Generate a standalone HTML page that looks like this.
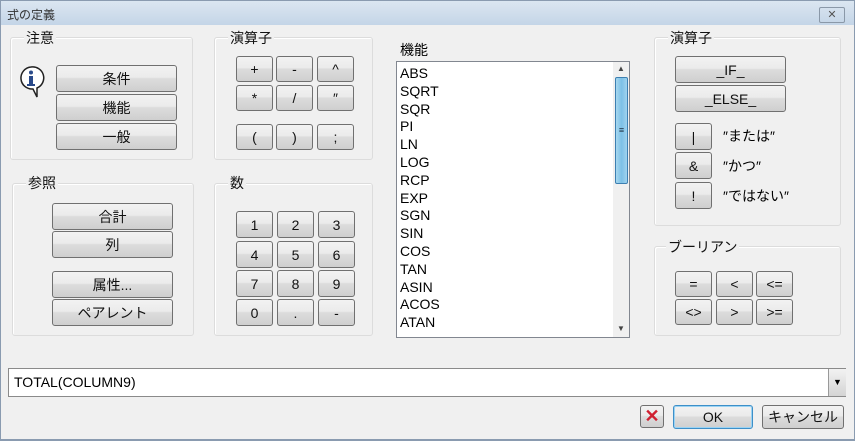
<!DOCTYPE html><html><head><meta charset="utf-8"><style>
body{margin:0;width:855px;height:441px;overflow:hidden;background:#f0f0f0;font-family:"Liberation Sans","Noto Sans CJK JP",sans-serif;position:relative}
.a{position:absolute}
.t{position:absolute;left:0;top:0;width:853px;height:24px;background:linear-gradient(#dbe6f1,#c4d5e7);border:1px solid #8a9bb0;border-bottom:none;font-size:12px;color:#333}
.g{position:absolute;border:1px solid #dcdcdc;border-radius:3px;box-shadow:inset 1px 1px 0 #fff}
.l{position:absolute;background:#f0f0f0;padding:0 2px;font-size:14px;color:#111;line-height:16px}
.b{position:absolute;box-sizing:border-box;border:1px solid #707070;border-radius:3px;background:linear-gradient(#f2f2f2 0,#ebebeb 45%,#dcdcdc 50%,#cfcfcf 100%);font-size:14px;color:#111;text-align:center;display:flex;align-items:center;justify-content:center}
.lb{position:absolute;left:396px;top:61px;width:234px;height:277px;background:#fff;border:1px solid #828790;box-sizing:border-box}
.lb div{font-size:14px;line-height:17.8px;padding-left:3px;color:#000}
</style></head><body>
<div class="t"><span class="a" style="left:6px;top:5px">式の定義</span>
<div class="a" style="left:818px;top:6px;width:24px;height:14px;border:1px solid #8a98a8;border-radius:2px;font-size:11px;text-align:center;line-height:14px;color:#555">✕</div></div>
<div class="a" style="left:0;top:24px;width:1px;height:417px;background:#8a9bb0"></div>
<div class="a" style="right:0;top:24px;width:1px;height:417px;background:#8a9bb0"></div>
<div class="a" style="left:0;top:439px;width:855px;height:2px;background:#8a9bb0"></div>

<div class="g" style="left:10px;top:37px;width:181px;height:121px"></div><div class="l" style="left:24px;top:30px">注意</div>
<svg class="a" style="left:18px;top:65px" width="28" height="36"><path d="M13 2a11 11 0 1 0 2 22l4 8v-9a11 11 0 0 0-6-21z" fill="#fff" stroke="#222" stroke-width="1.5"/><circle cx="13" cy="7.5" r="2" fill="#2a4a8a"/><rect x="11" y="11" width="4" height="9" fill="#2a4a8a"/><rect x="9" y="19" width="8" height="2" fill="#2a4a8a"/></svg>
<div class="b" style="left:56px;top:65px;width:121px;height:27px">条件</div>
<div class="b" style="left:56px;top:94px;width:121px;height:27px">機能</div>
<div class="b" style="left:56px;top:123px;width:121px;height:27px">一般</div>

<div class="g" style="left:214px;top:37px;width:157px;height:121px"></div><div class="l" style="left:228px;top:30px">演算子</div>
<div class="b" style="left:236px;top:56px;width:37px;height:26px">+</div><div class="b" style="left:276px;top:56px;width:37px;height:26px">-</div><div class="b" style="left:317px;top:56px;width:37px;height:26px">^</div>
<div class="b" style="left:236px;top:85px;width:37px;height:26px">*</div><div class="b" style="left:276px;top:85px;width:37px;height:26px">/</div><div class="b" style="left:317px;top:85px;width:37px;height:26px">″</div>
<div class="b" style="left:236px;top:124px;width:37px;height:26px">(</div><div class="b" style="left:276px;top:124px;width:37px;height:26px">)</div><div class="b" style="left:317px;top:124px;width:37px;height:26px">;</div>

<div class="g" style="left:12px;top:183px;width:180px;height:151px"></div><div class="l" style="left:26px;top:175px">参照</div>
<div class="b" style="left:52px;top:203px;width:121px;height:27px">合計</div>
<div class="b" style="left:52px;top:231px;width:121px;height:27px">列</div>
<div class="b" style="left:52px;top:271px;width:121px;height:27px">属性...</div>
<div class="b" style="left:52px;top:299px;width:121px;height:27px">ペアレント</div>

<div class="g" style="left:214px;top:183px;width:157px;height:151px"></div><div class="l" style="left:228px;top:175px">数</div>
<div class="b" style="left:236px;top:211px;width:37px;height:27px">1</div><div class="b" style="left:277px;top:211px;width:37px;height:27px">2</div><div class="b" style="left:318px;top:211px;width:37px;height:27px">3</div>
<div class="b" style="left:236px;top:241px;width:37px;height:27px">4</div><div class="b" style="left:277px;top:241px;width:37px;height:27px">5</div><div class="b" style="left:318px;top:241px;width:37px;height:27px">6</div>
<div class="b" style="left:236px;top:270px;width:37px;height:27px">7</div><div class="b" style="left:277px;top:270px;width:37px;height:27px">8</div><div class="b" style="left:318px;top:270px;width:37px;height:27px">9</div>
<div class="b" style="left:236px;top:299px;width:37px;height:27px">0</div><div class="b" style="left:277px;top:299px;width:37px;height:27px">.</div><div class="b" style="left:318px;top:299px;width:37px;height:27px">-</div>

<div class="a" style="left:400px;top:40px;font-size:14px">機能</div>
<div class="lb"><div style="height:3px"></div><div>ABS</div><div>SQRT</div><div>SQR</div><div>PI</div><div>LN</div><div>LOG</div><div>RCP</div><div>EXP</div><div>SGN</div><div>SIN</div><div>COS</div><div>TAN</div><div>ASIN</div><div>ACOS</div><div>ATAN</div></div>
<div class="a" style="left:613px;top:62px;width:16px;height:275px;background:#f0f0f0"></div>
<div class="a" style="left:617px;top:64px;font-size:8px;color:#444">▲</div>
<div class="a" style="left:617px;top:324px;font-size:8px;color:#444">▼</div>
<div class="a" style="left:615px;top:77px;width:13px;height:107px;border:1px solid #3c7fb1;border-radius:2px;background:linear-gradient(90deg,#a8d8f0,#7cc0e6 50%,#9fd2ee);box-sizing:border-box;font-size:9px;text-align:center;line-height:105px;color:#234">≡</div>

<div class="g" style="left:654px;top:37px;width:185px;height:187px"></div><div class="l" style="left:668px;top:30px">演算子</div>
<div class="b" style="left:675px;top:56px;width:111px;height:27px">_IF_</div>
<div class="b" style="left:675px;top:85px;width:111px;height:27px">_ELSE_</div>
<div class="b" style="left:675px;top:123px;width:37px;height:27px">|</div><div class="a" style="left:723px;top:126px;font-size:14px">″または″</div>
<div class="b" style="left:675px;top:152px;width:37px;height:27px">&amp;</div><div class="a" style="left:723px;top:156px;font-size:14px">″かつ″</div>
<div class="b" style="left:675px;top:182px;width:37px;height:27px">!</div><div class="a" style="left:723px;top:186px;font-size:14px">″ではない″</div>

<div class="g" style="left:654px;top:246px;width:185px;height:88px"></div><div class="l" style="left:666px;top:239px">ブーリアン</div>
<div class="b" style="left:675px;top:271px;width:37px;height:26px">=</div><div class="b" style="left:716px;top:271px;width:37px;height:26px">&lt;</div><div class="b" style="left:756px;top:271px;width:37px;height:26px">&lt;=</div>
<div class="b" style="left:675px;top:299px;width:37px;height:26px">&lt;&gt;</div><div class="b" style="left:716px;top:299px;width:37px;height:26px">&gt;</div><div class="b" style="left:756px;top:299px;width:37px;height:26px">&gt;=</div>

<div class="a" style="left:8px;top:368px;width:838px;height:29px;background:#fff;border:1px solid #8a8a8a;box-sizing:border-box;font-size:14px;line-height:27px;padding-left:5px">TOTAL(COLUMN9)</div>
<div class="a" style="left:828px;top:369px;width:17px;height:27px;border-left:1px solid #999;background:linear-gradient(#f2f2f2,#d4d4d4);font-size:9px;text-align:center;line-height:27px">▼</div>

<div class="b" style="left:640px;top:405px;width:24px;height:23px;color:#d02030;font-size:18px;font-weight:bold">✕</div>
<div class="b" style="left:673px;top:405px;width:80px;height:24px;border:1px solid #3d8fc8;box-shadow:inset 0 0 0 1px #9bd3f3">OK</div>
<div class="b" style="left:762px;top:405px;width:82px;height:24px">キャンセル</div>
</body></html>
